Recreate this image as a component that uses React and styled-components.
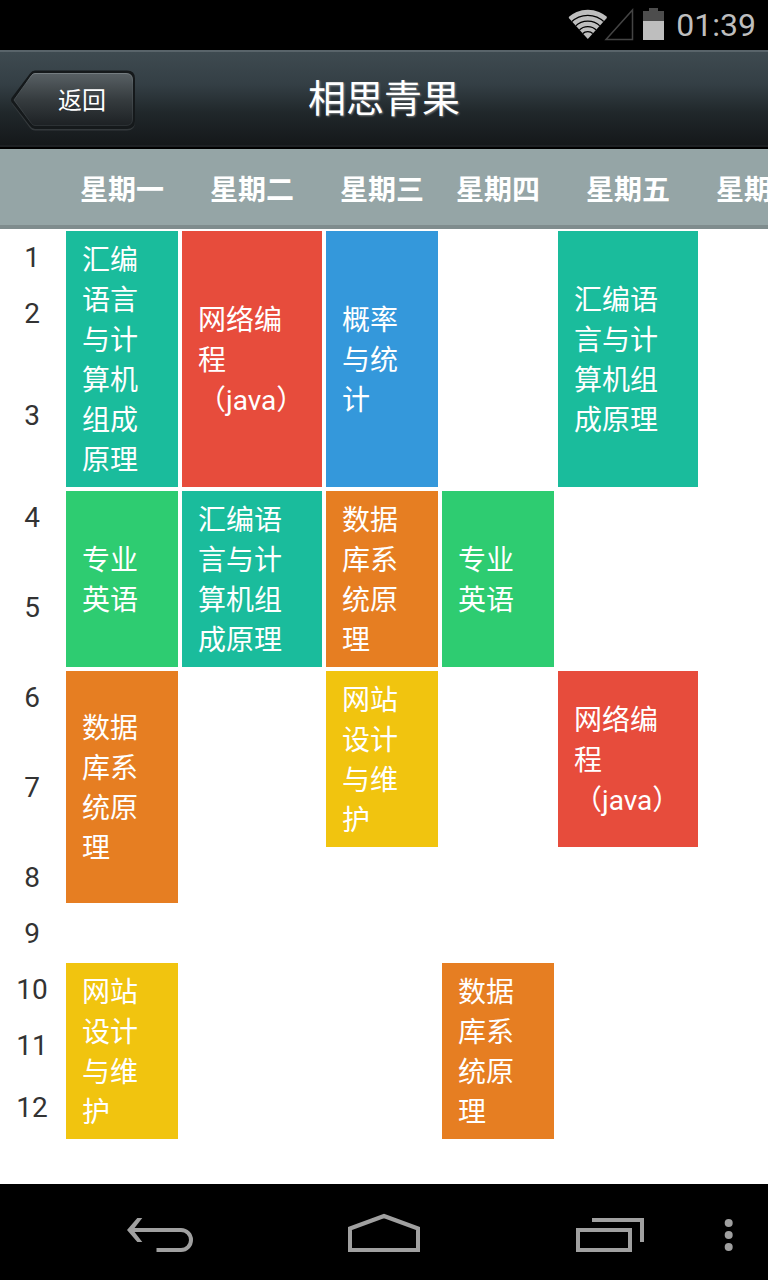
import React from "react";
import styled, { createGlobalStyle } from "styled-components";

const GlobalStyle = createGlobalStyle`
  *, *::before, *::after { box-sizing: border-box; }
  body {
    margin: 0;
    background: #fff;
    font-family: Roboto, "Noto Sans CJK SC", sans-serif;
  }
`;

const colors = {
  teal: "#1abc9c",
  red: "#e74c3c",
  blue: "#3498db",
  green: "#2ecc71",
  orange: "#e67e22",
  yellow: "#f1c40f",
};

const Screen = styled.div`
  display: flex;
  flex-direction: column;
  min-height: 100vh;
`;

const StatusBar = styled.div`
  display: flex;
  align-items: center;
  justify-content: flex-end;
  height: 50px;
  padding-right: 12px;
  background: #000;
`;

const StatusIcons = styled.svg`
  flex: none;
  width: 100px;
  height: 50px;
  margin-right: 8px;
`;

const Clock = styled.time`
  color: #bebebe;
  font-size: 32px;
  line-height: 50px;
`;

const AppBar = styled.header`
  display: grid;
  grid-template-columns: 1fr auto 1fr;
  align-items: center;
  height: 99px;
  padding: 0 8px;
  border-bottom: 2px solid #000;
  background: linear-gradient(#3f4b51, #343f45 35%, #20272a 65%, #141719);
  box-shadow: inset 0 2px #59646a, inset 0 -2px #1d2023;
`;

const Title = styled.h1`
  margin: 0;
  color: #fff;
  font-size: 38px;
  font-weight: 400;
  line-height: 56px;
  text-shadow: 1px 1px 2px rgba(255, 255, 255, 0.4);
`;

const BackButton = styled.button`
  display: grid;
  justify-self: start;
  width: 132px;
  height: 64px;
  padding: 0;
  border: 0;
  background: none;
  color: #fff;
  font-family: inherit;
  font-size: 24px;
  line-height: 64px;
  cursor: pointer;

  > * {
    grid-area: 1 / 1;
  }
`;

const BackLabel = styled.span`
  padding: 2px 0 0 16px;
`;

const Timetable = styled.main`
  flex: 1;
  overflow: hidden;
  background: #fff;
`;

const Table = styled.table`
  width: 816px;
  table-layout: fixed;
  border-collapse: separate;
  border-spacing: 0;
  font-size: 28px;
  line-height: 40px;
`;

const Column = styled.col`
  width: ${(p) => p.$width}px;
`;

const HeadRow = styled.tr`
  height: 80px;
`;

const DayHead = styled.th`
  padding: 4px 0 0;
  background: #95a5a6;
  box-shadow: inset 0 -4px #7f8c8d;
  color: #fff;
  font-weight: 700;
  white-space: nowrap;
`;

const PeriodRow = styled.tr`
  height: ${(p) => p.$height}px;
`;

const PeriodHead = styled.th`
  padding: 2px 0 0;
  color: #333;
  font-weight: 400;
`;

const Slot = styled.td`
  padding: 0;
`;

const Course = styled.td`
  padding: 10px 16px 6px;
  border: 2px solid #fff;
  background: ${(p) => colors[p.$tone]};
  color: #fff;
  vertical-align: middle;
`;

const NavBar = styled.nav`
  display: flex;
  height: 96px;
  padding-left: 80px;
  background: #000;
`;

const NavMain = styled.div`
  flex: 1;
  display: grid;
  grid-template-columns: repeat(3, 1fr);
  gap: 64px;
`;

const NavButton = styled.button`
  display: flex;
  align-items: center;
  justify-content: center;
  min-width: 80px;
  padding: 0;
  border: 0;
  background: none;
  color: #a0a0a0;
  cursor: pointer;
`;

const assembly = "汇编语言与计算机组成原理";
const network = "网络编程（java）";
const database = "数据库系统原理";
const website = "网站设计与维护";
const english = "专业英语";

const days = ["星期一", "星期二", "星期三", "星期四", "星期五", "星期六"];
const columnWidths = [64, 116, 144, 116, 116, 144, 116];

const course = (day, name, tone, span) => ({ day, name, tone, span });

const periods = [
  {
    height: 56,
    courses: [
      course(0, assembly, "teal", 3),
      course(1, network, "red", 3),
      course(2, "概率与统计", "blue", 3),
      course(4, assembly, "teal", 3),
    ],
  },
  { height: 56, courses: [] },
  { height: 148, courses: [] },
  {
    height: 56,
    courses: [
      course(0, english, "green", 2),
      course(1, assembly, "teal", 2),
      course(2, database, "orange", 2),
      course(3, english, "green", 2),
    ],
  },
  { height: 124, courses: [] },
  {
    height: 56,
    courses: [
      course(0, database, "orange", 3),
      course(2, website, "yellow", 2),
      course(4, network, "red", 2),
    ],
  },
  { height: 124, courses: [] },
  { height: 56, courses: [] },
  { height: 56, courses: [] },
  {
    height: 56,
    courses: [course(0, website, "yellow", 3), course(3, database, "orange", 3)],
  },
  { height: 56, courses: [] },
  { height: 68, courses: [] },
];

const isCovered = (row, day) =>
  periods.some(
    (period, start) =>
      start < row && period.courses.some((c) => c.day === day && start + c.span > row)
  );

function renderSlot(row, day) {
  if (isCovered(row, day)) return null;
  const item = periods[row].courses.find((c) => c.day === day);
  if (!item) return <Slot key={day} />;
  return (
    <Course key={day} rowSpan={item.span} $tone={item.tone}>
      {item.name}
    </Course>
  );
}

function StatusGlyphs() {
  return (
    <StatusIcons viewBox="0 0 100 50" aria-hidden="true">
      <defs>
        <clipPath id="wifi-fan">
          <path d="M19.8 39 L0.8 18 V4 H38.8 V18 Z" />
        </clipPath>
      </defs>
      <g clipPath="url(#wifi-fan)" fill="none" stroke="#000" strokeWidth="1.3">
        <circle cx="19.8" cy="39" r="29.3" fill="#bebebe" stroke="none" />
        <circle cx="19.8" cy="39" r="23.7" />
        <circle cx="19.8" cy="39" r="17.8" />
        <circle cx="19.8" cy="39" r="12.4" />
        <circle cx="19.8" cy="39" r="7.4" />
      </g>
      <path d="M38 39.5 L64.5 10 V39.5 Z" fill="none" stroke="#444" strokeWidth="1.5" />
      <path d="M75 11 H81 V8 H90 V11 H96 V21 H75 Z" fill="#4d4d4d" />
      <path d="M75 21 H96 V40 H75 Z" fill="#bebebe" />
    </StatusIcons>
  );
}

function BackShape() {
  return (
    <svg width="132" height="64" viewBox="0 0 132 64" aria-hidden="true">
      <defs>
        <linearGradient id="back-face" x1="0" y1="0" x2="0" y2="1">
          <stop offset="0" stopColor="#586064" />
          <stop offset="0.5" stopColor="#363c3f" />
          <stop offset="1" stopColor="#1d2124" />
        </linearGradient>
        <linearGradient id="back-edge" x1="0" y1="0" x2="0" y2="1">
          <stop offset="0" stopColor="#757d81" />
          <stop offset="0.2" stopColor="#50585c" />
          <stop offset="1" stopColor="#2c3134" />
        </linearGradient>
      </defs>
      <path
        d="M27 7 H119 Q127 7 127 15 V55 Q127 63.5 119 63.5 H27 Q24 63.5 22 61 L4 37 Q3 35 4 33 L22 10 Q24 7 27 7 Z"
        fill="#34393c"
      />
      <path
        d="M27 3.500 H119 Q127 3.500 127 11.500 V54 Q127 62 119 62 H27 Q24 62 22 59 L3.500 35 Q2.500 33 3.500 31 L22 6.500 Q24 3.500 27 3.500 Z"
        fill="#15191b"
      />
      <path
        d="M27 6.500 H118 Q124.500 6.500 124.500 13 V52 Q124.500 58.500 118 58.500 H27 Q25 58.500 23.500 56.500 L6 33 L23.500 8.500 Q25 6.500 27 6.500 Z"
        fill="url(#back-face)"
        stroke="url(#back-edge)"
      />
    </svg>
  );
}

export default function App() {
  return (
    <Screen>
      <GlobalStyle />
      <StatusBar>
        <StatusGlyphs />
        <Clock dateTime="01:39">01:39</Clock>
      </StatusBar>

      <AppBar>
        <BackButton type="button">
          <BackShape />
          <BackLabel>返回</BackLabel>
        </BackButton>
        <Title>相思青果</Title>
      </AppBar>

      <Timetable>
        <Table>
          <colgroup>
            {columnWidths.map((width, i) => (
              <Column key={i} $width={width} />
            ))}
          </colgroup>
          <thead>
            <HeadRow>
              <DayHead as="td" />
              {days.map((day) => (
                <DayHead key={day} scope="col">
                  {day}
                </DayHead>
              ))}
            </HeadRow>
          </thead>
          <tbody>
            {periods.map((period, row) => (
              <PeriodRow key={row} $height={period.height}>
                <PeriodHead scope="row">{row + 1}</PeriodHead>
                {days.map((_, day) => renderSlot(row, day))}
              </PeriodRow>
            ))}
          </tbody>
        </Table>
      </Timetable>

      <NavBar>
        <NavMain>
          <NavButton type="button" aria-label="返回">
            <svg width="80" height="48" viewBox="0 0 80 48">
              <path d="M11 22 H61 a10 10 0 0 1 0 20 H36.500" fill="none" stroke="currentColor" strokeWidth="4" />
              <path d="M17.300 10 H22.300 L13 22 L22.300 34 H17.300 L7 22 Z" fill="currentColor" />
            </svg>
          </NavButton>
          <NavButton type="button" aria-label="主屏幕">
            <svg width="80" height="48" viewBox="0 0 80 48">
              <path d="M6 42 V20.500 L40 8 L74 20.500 V42 Z" fill="none" stroke="currentColor" strokeWidth="4" />
            </svg>
          </NavButton>
          <NavButton type="button" aria-label="最近任务">
            <svg width="80" height="48" viewBox="0 0 80 48" fill="none" stroke="currentColor" strokeWidth="4">
              <rect x="10" y="22" width="52" height="20" />
              <path d="M24 12 H74 V34" />
            </svg>
          </NavButton>
        </NavMain>
        <NavButton type="button" aria-label="菜单">
          <svg width="16" height="48" viewBox="0 0 16 48" fill="currentColor">
            <circle cx="8.700" cy="15" r="4" />
            <circle cx="8.700" cy="27" r="4" />
            <circle cx="8.700" cy="39" r="4" />
          </svg>
        </NavButton>
      </NavBar>
    </Screen>
  );
}
